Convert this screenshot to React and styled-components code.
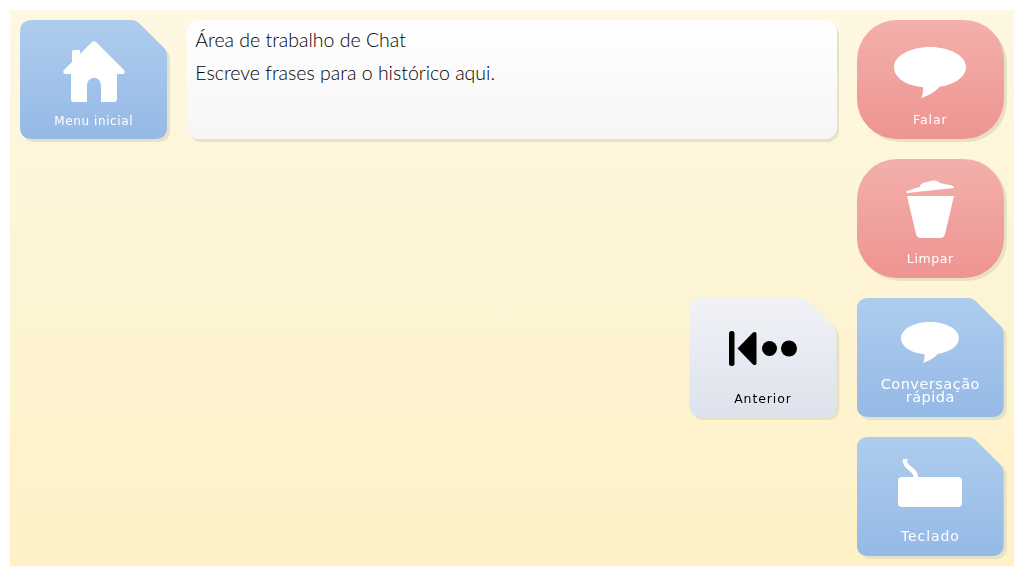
import React from 'react';
import styled, { createGlobalStyle } from 'styled-components';

const GlobalStyle = createGlobalStyle`
  html, body {
    margin: 0;
    padding: 0;
    background: #ffffff;
  }
  body {
    font-family: 'Lato', 'Liberation Sans', sans-serif;
  }
`;

const palette = {
  blue: { top: '#aecdee', bottom: '#95b9e6', text: '#ffffff' },
  red: { top: '#f3b0ac', bottom: '#ee9490', text: '#ffffff' },
  grey: { top: '#f1f2f7', bottom: '#dde2ec', text: '#000000' },
};

const Page = styled.div`
  width: 1024px;
  height: 576px;
  padding: 10px;
  box-sizing: border-box;
`;

const Board = styled.main`
  height: 100%;
  padding: 10px;
  box-sizing: border-box;
  background: linear-gradient(#fef8e3, #fdf1c6);
  display: grid;
  grid-template-columns: repeat(6, 1fr);
  grid-template-rows: repeat(4, 119px);
  gap: 20px;
`;

const MessageBar = styled.div`
  grid-column: 2 / span 4;
  grid-row: 1;
  padding: 3px 8px;
  border-radius: 12px;
  background: linear-gradient(#ffffff, #f6f6f6);
  box-shadow: 2px 3px 0 #e8e2c4;
  color: #000000;
  font-size: 19.5px;
  font-weight: 300;
  line-height: 33px;
`;

const MessageLine = styled.div``;

const TileSlot = styled.div`
  grid-column: ${(p) => p.$col};
  grid-row: ${(p) => p.$row};
  filter: drop-shadow(3px 3px 0 #e8e2c4);
`;

// blue and grey tiles have the top right corner cut off
const Tile = styled.button`
  width: 100%;
  height: 100%;
  padding: 0 4px;
  border: none;
  display: flex;
  flex-direction: column;
  align-items: center;
  background: linear-gradient(${(p) => palette[p.$tone].top}, ${(p) => palette[p.$tone].bottom});
  color: ${(p) => palette[p.$tone].text};
  border-radius: ${(p) => (p.$round ? '40px' : '0')};
  clip-path: ${(p) =>
    p.$round
      ? 'none'
      : `path('M12 0 H112 Q116 0 119 3 L144 28 Q147 31 147 35 V107 Q147 119 135 119 H12 Q0 119 0 107 V12 Q0 0 12 0 Z')`};
`;

const IconArea = styled.div`
  flex: 1;
  min-height: 0;
  display: flex;
  align-items: center;
  justify-content: center;
  padding-top: ${(p) => p.$top || 0}px;
  padding-bottom: ${(p) => p.$under || 0}px;
`;

const Label = styled.span`
  font-family: 'DejaVu Sans', sans-serif;
  font-size: ${(p) => p.$size}px;
  line-height: 13px;
  text-align: center;
  padding-bottom: ${(p) => p.$bottom || 12}px;
  letter-spacing: ${(p) => p.$spacing}px;
`;

const HomeIcon = () => (
  <svg width="62" height="61" viewBox="0 0 62 61" fill="#fff">
    <path
      fillRule="evenodd"
      d="M29 1 Q31 -0.500 33 1 L61 29 Q63 32 60 33 L54 33 V58 Q54 61 51 61 L38 61 V45 C38 34 24 34 24 45 V61 L11 61 Q8 61 8 58 V33 L2 33 Q-1 32 1 29 L9 21 V11 Q9 9 11 9 H17 V13 Z"
    />
  </svg>
);

const BubbleIcon = ({ w, h }) => (
  <svg width={w} height={h} viewBox="0 0 72 51" fill="#fff">
    <path d="M36 0 C56 0 72 9 72 20 C72 30 60 38 46 39.500 C40 46 33 49 27 51 C29 48 29.500 44 29 40 C13 39 0 31 0 20 C0 9 16 0 36 0 Z" />
  </svg>
);

const TrashIcon = () => (
  <svg width="48" height="58" viewBox="0 0 48 58" fill="#fff">
    <path d="M0.500 11.500 Q1 10.500 14 7 Q14 4 17 3 L27 0.500 Q32 0 34 3 L46 5.500 Q48 6.500 48 8 L1 13 Q0 13 0.500 11.500 Z" />
    <path d="M1 16 H48 L39 54 Q38 58 34 58 H15 Q11 58 10 54 Z" />
  </svg>
);

const PreviousIcon = () => (
  <svg width="68" height="35" viewBox="0 0 68 35" fill="#000">
    <rect x="0" y="0" width="5.500" height="35" rx="2.500" />
    <path d="M8.500 17.500 L24 1.500 Q27.500 0 27.500 3 V32 Q27.500 35 24 33.500 Z" />
    <circle cx="40.500" cy="17.500" r="7.500" />
    <circle cx="60" cy="17.500" r="8" />
  </svg>
);

const KeyboardIcon = () => (
  <svg width="64" height="48" viewBox="0 0 64 48" fill="#fff">
    <rect x="0" y="18" width="64" height="30" rx="4" />
    <path d="M7 0 V2 C7 10 18 9 18 19" fill="none" stroke="#fff" strokeWidth="4.500" />
  </svg>
);

const tiles = [
  { col: 1, row: 1, tone: 'blue', label: 'Menu inicial', size: 12, spacing: 0.6, bottom: 11, top: 7, icon: <HomeIcon /> },
  { col: 6, row: 1, tone: 'red', round: true, label: 'Falar', size: 12.500, spacing: 0.9, bottom: 13, top: 11, icon: <BubbleIcon w={72} h={51} /> },
  { col: 6, row: 2, tone: 'red', round: true, label: 'Limpar', size: 12.500, spacing: 0.6, bottom: 13, top: 7, icon: <TrashIcon /> },
  { col: 5, row: 3, tone: 'grey', label: 'Anterior', size: 12.500, spacing: 0.9, top: 6, icon: <PreviousIcon /> },
  { col: 6, row: 3, tone: 'blue', label: 'Conversação rápida', size: 14.500, spacing: 0.5, bottom: 13, top: 8, icon: <BubbleIcon w={58} h={41} /> },
  { col: 6, row: 4, tone: 'blue', label: 'Teclado', size: 14, spacing: 0.9, bottom: 13, under: 2, icon: <KeyboardIcon /> },
];

const App = () => (
  <Page>
    <GlobalStyle />
    <Board>
      <MessageBar>
        <MessageLine>Área de trabalho de Chat</MessageLine>
        <MessageLine>Escreve frases para o histórico aqui.</MessageLine>
      </MessageBar>
      {tiles.map((t) => (
        <TileSlot key={t.label} $col={t.col} $row={t.row}>
          <Tile $tone={t.tone} $round={t.round}>
            <IconArea $top={t.top} $under={t.under}>{t.icon}</IconArea>
            <Label $size={t.size} $spacing={t.spacing} $bottom={t.bottom}>
              {t.label}
            </Label>
          </Tile>
        </TileSlot>
      ))}
    </Board>
  </Page>
);

export default App;
